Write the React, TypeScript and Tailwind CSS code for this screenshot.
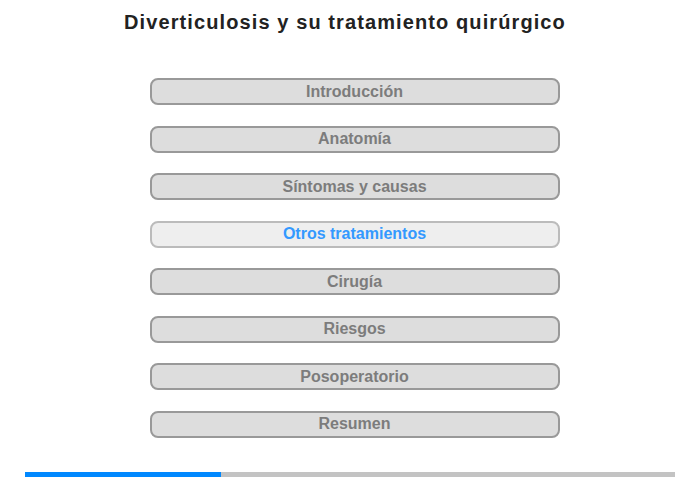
import React from "react";

const items = [
  "Introducción",
  "Anatomía",
  "Síntomas y causas",
  "Otros tratamientos",
  "Cirugía",
  "Riesgos",
  "Posoperatorio",
  "Resumen",
];

export default function App() {
  return (
    <div
      className="w-[700px] h-[480px] bg-white flex flex-col items-center"
      style={{ fontFamily: '"Liberation Sans", Arial, sans-serif' }}
    >
      <h1 className="mt-[10px] mr-[10px] text-[20px] leading-[24px] font-bold tracking-[1.1px] text-[#222]">
        Diverticulosis y su tratamiento quirúrgico
      </h1>
      <div className="mt-[44px] ml-[9px] flex flex-col gap-[20.5px] w-[410px]">
        {items.map((t, i) => {
          const active = i === 3;
          return (
            <div
              key={t}
              className={
                active
                  ? "h-[27px] rounded-[8px] border-2 border-[#bbbbbb] bg-[#eeeeee] text-[#3399ff] flex items-center justify-center text-[16px] font-bold"
                  : "h-[27px] rounded-[8px] border-2 border-[#999999] bg-[#dddddd] text-[#7c7c7c] flex items-center justify-center text-[16px] font-bold"
              }
            >
              {t}
            </div>
          );
        })}
      </div>
      <div className="mt-[34px] w-[650px] h-[5px] bg-[#c3c3c3] flex">
        <div className="w-[196px] h-full bg-[#0088ff]" />
      </div>
    </div>
  );
}
